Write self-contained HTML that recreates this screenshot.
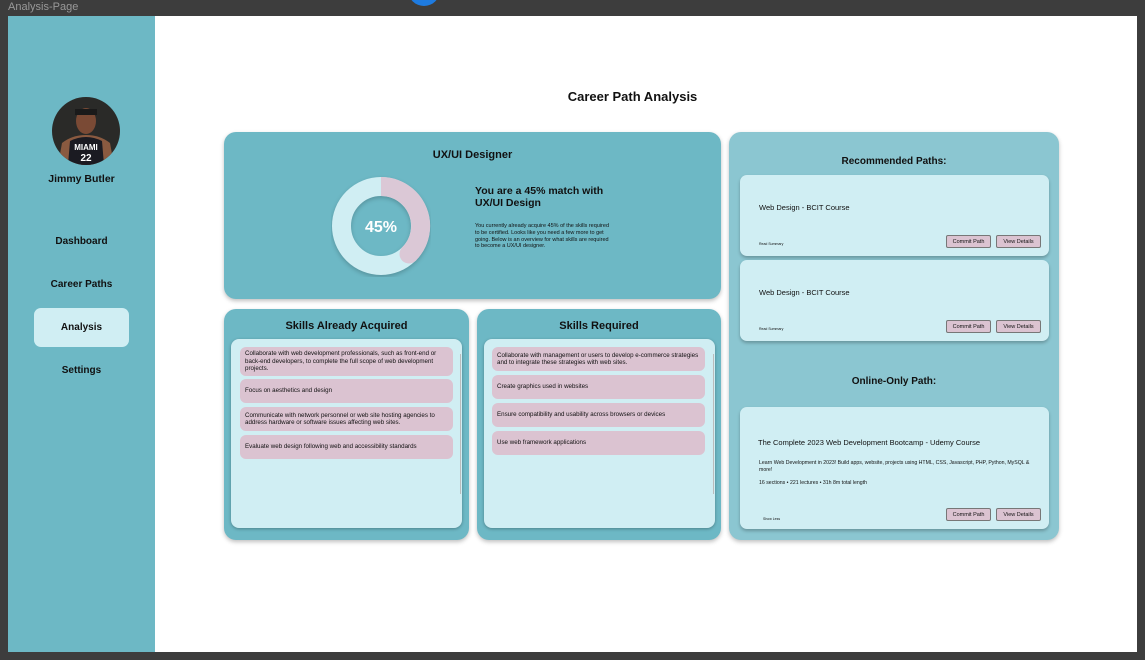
<!DOCTYPE html>
<html><head><meta charset="utf-8"><style>
*{box-sizing:border-box;margin:0;padding:0}
body{width:1145px;height:660px;background:#3d3d3d;font-family:"Liberation Sans",sans-serif;position:relative;overflow:hidden;color:#111}
.a{position:absolute}
.card{position:absolute;background:#6db8c5;border-radius:12px;box-shadow:0 2px 4px rgba(0,0,0,.25)}
.b{font-weight:bold}
.inner{position:absolute;background:#d0eef3;border-radius:8px;box-shadow:0 1px 3px rgba(0,0,0,.3)}
.item{position:absolute;left:9px;width:213px;background:#dbc3d1;border-radius:6px;font-size:6.2px;line-height:7.5px;padding:4px 5px;display:flex;align-items:center}
.pc{position:absolute;left:11px;width:309px;background:#d0eef3;border-radius:7px;box-shadow:0 2px 3px rgba(0,0,0,.25)}
.btn{position:absolute;width:45px;height:13px;background:#dbc3d1;border:1px solid #777;border-radius:2px;font-size:5.5px;display:flex;align-items:center;justify-content:center}
.nav{position:absolute;width:147px;text-align:center;font-weight:bold;font-size:10px}
</style></head><body>
<div class="a" style="left:8px;top:1px;font-size:11px;color:#999">Analysis-Page</div>
<div class="a" style="left:408px;top:-12px;width:32px;height:18px;border-radius:0 0 16px 16px;background:#1e7be0"></div>
<div class="a" style="left:8px;top:16px;width:1129px;height:636px;background:#fff"></div>
<div class="a" style="left:8px;top:16px;width:147px;height:636px;background:#6db8c5"></div>
<svg class="a" style="left:52px;top:97px" width="68" height="68" viewBox="0 0 68 68">
<defs><clipPath id="c"><circle cx="34" cy="34" r="34"/></clipPath></defs>
<g clip-path="url(#c)"><rect width="68" height="68" fill="#2a2a28"/>
<ellipse cx="34" cy="24" rx="10" ry="13" fill="#7a4a35"/><rect x="23" y="12" width="22" height="6" fill="#1a1a1a"/>
<path d="M6 68 L10 46 Q20 38 34 38 Q48 38 58 46 L62 68Z" fill="#8a5a40"/>
<path d="M16 68 L18 44 Q34 36 50 44 L52 68Z" fill="#1b1b22"/>
<text x="34" y="53" font-size="8" font-weight="bold" fill="#fff" text-anchor="middle" font-family="Liberation Sans">MIAMI</text>
<text x="34" y="64" font-size="10" font-weight="bold" fill="#fff" text-anchor="middle" font-family="Liberation Sans">22</text></g></svg>
<div class="nav" style="left:8px;top:173px;font-size:10.5px">Jimmy Butler</div>
<div class="nav" style="left:8px;top:236px">Dashboard</div>
<div class="nav" style="left:8px;top:279px">Career Paths</div>
<div class="a" style="left:34px;top:308px;width:95px;height:39px;background:#d0eef3;border-radius:7px"></div>
<div class="nav" style="left:8px;top:322px">Analysis</div>
<div class="nav" style="left:8px;top:365px">Settings</div>

<div class="a b" style="left:155px;width:955px;text-align:center;top:89px;font-size:13px">Career Path Analysis</div>

<div class="card" style="left:224px;top:132px;width:497px;height:167px">
<div class="a b" style="left:0;width:497px;text-align:center;top:17px;font-size:11px">UX/UI Designer</div>
<svg class="a" style="left:107px;top:43px" width="100" height="102" viewBox="0 0 100 102">
<circle cx="50" cy="51" r="39.5" fill="none" stroke="#d0eef3" stroke-width="19" filter="drop-shadow(0 2px 2px rgba(0,0,0,.2))"/>
<path d="M50 11.5 A39.5 39.5 0 0 1 78 79" fill="none" stroke="#dbc8d6" stroke-width="19"/>
<circle cx="78" cy="79" r="9.5" fill="#dbc8d6"/>
<text x="50" y="57" text-anchor="middle" font-size="16" font-weight="bold" fill="#fff" font-family="Liberation Sans">45%</text></svg>
<div class="a b" style="left:251px;top:53px;font-size:10.5px;line-height:12px">You are a 45% match with<br>UX/UI Design</div>
<div class="a" style="left:251px;top:91px;font-size:5.5px;line-height:6.8px;width:135px">You currently already acquire 45% of the skills required to be certified.  Looks like you need a few more to get going. Below is an overview for what skills are required to become a UX/UI designer.</div>
</div>

<div class="card" style="left:224px;top:309px;width:245px;height:231px">
<div class="a b" style="left:0;width:245px;text-align:center;top:11px;font-size:11px">Skills Already Acquired</div>
<div class="inner" style="left:7px;top:30px;width:231px;height:189px">
<div class="item" style="top:8px;height:29px">Collaborate with web development professionals, such as front-end or back-end developers, to complete the full scope of web development projects.</div>
<div class="item" style="top:40px;height:24px">Focus on aesthetics and design</div>
<div class="item" style="top:68px;height:24px">Communicate with network personnel or web site hosting agencies to address hardware or software issues affecting web sites.</div>
<div class="item" style="top:96px;height:24px">Evaluate web design following web and accessibility standards</div>
<div class="a" style="left:229px;top:15px;width:1px;height:140px;background:#bbb"></div>
</div></div>

<div class="card" style="left:477px;top:309px;width:244px;height:231px">
<div class="a b" style="left:0;width:244px;text-align:center;top:11px;font-size:11px">Skills Required</div>
<div class="inner" style="left:7px;top:30px;width:231px;height:189px">
<div class="item" style="top:8px;height:24px;left:8px">Collaborate with management or users to develop e-commerce strategies and to integrate these strategies with web sites.</div>
<div class="item" style="top:36px;height:24px;left:8px">Create graphics used in websites</div>
<div class="item" style="top:64px;height:24px;left:8px">Ensure compatibility and usability across browsers or devices</div>
<div class="item" style="top:92px;height:24px;left:8px">Use web framework applications</div>
<div class="a" style="left:229px;top:15px;width:1px;height:140px;background:#bbb"></div>
</div></div>

<div class="card" style="left:729px;top:132px;width:330px;height:408px;background:#8bc6d1">
<div class="a b" style="left:0;width:330px;text-align:center;top:24px;font-size:10px">Recommended Paths:</div>
<div class="pc" style="top:43px;height:81px">
<div class="a" style="left:19px;top:28px;font-size:7.5px">Web Design - BCIT Course</div>
<div class="a" style="left:19px;top:67px;font-size:3.5px">Read Summary</div>
<div class="btn" style="left:206px;top:60px">Commit Path</div><div class="btn" style="left:256px;top:60px">View Details</div></div>
<div class="pc" style="top:128px;height:81px">
<div class="a" style="left:19px;top:28px;font-size:7.5px">Web Design - BCIT Course</div>
<div class="a" style="left:19px;top:67px;font-size:3.5px">Read Summary</div>
<div class="btn" style="left:206px;top:60px">Commit Path</div><div class="btn" style="left:256px;top:60px">View Details</div></div>
<div class="a b" style="left:0;width:330px;text-align:center;top:244px;font-size:10px">Online-Only Path:</div>
<div class="pc" style="top:275px;height:122px">
<div class="a" style="left:18px;top:31px;font-size:7.5px">The Complete 2023 Web Development Bootcamp - Udemy Course</div>
<div class="a" style="left:19px;top:53px;font-size:5.2px;line-height:6.6px;width:280px">Learn Web Development in 2023! Build apps, website, projects using HTML, CSS, Javascript, PHP, Python, MySQL &amp; more!</div>
<div class="a" style="left:19px;top:73px;font-size:5.2px">16 sections • 221 lectures • 31h 8m total length</div>
<div class="a" style="left:23px;top:110px;font-size:3.5px">Show Less</div>
<div class="btn" style="left:206px;top:101px">Commit Path</div><div class="btn" style="left:256px;top:101px">View Details</div></div>
</div>
</body></html>
